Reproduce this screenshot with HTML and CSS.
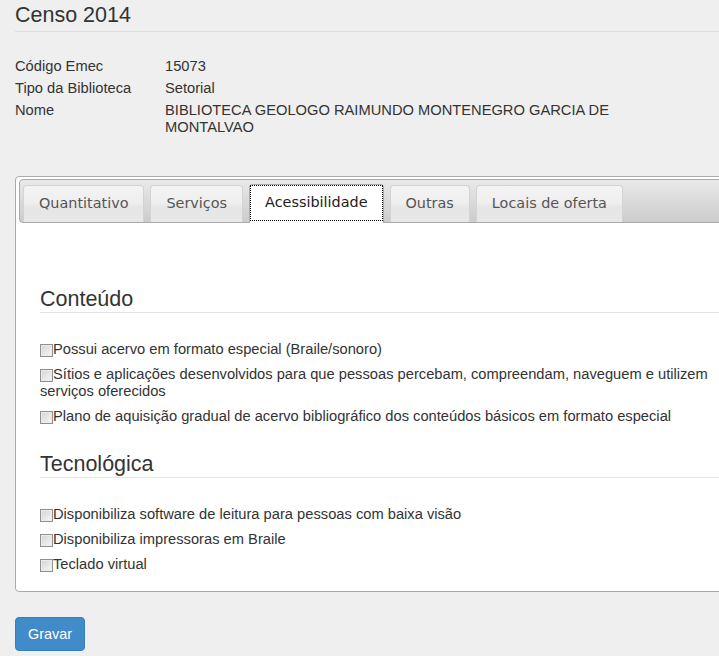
FILE: index.html
```html
<!DOCTYPE html>
<html lang="pt">
<head>
<meta charset="utf-8">
<title>Censo 2014</title>
<link rel="stylesheet" href="styles.css">
</head>
<body>
<div class="page">
  <h1 class="page-title">Censo 2014</h1>

  <div class="info">
    <div class="info-label">Código Emec</div>
    <div class="info-value">15073</div>
    <div class="info-label">Tipo da Biblioteca</div>
    <div class="info-value">Setorial</div>
    <div class="info-label">Nome</div>
    <div class="info-value">BIBLIOTECA GEOLOGO RAIMUNDO MONTENEGRO GARCIA DE MONTALVAO</div>
  </div>

  <div class="tabs">
    <ul class="tabnav">
      <li class="tab"><a>Quantitativo</a></li>
      <li class="tab"><a>Serviços</a></li>
      <li class="tab active"><a>Acessibilidade</a></li>
      <li class="tab"><a>Outras</a></li>
      <li class="tab"><a>Locais de oferta</a></li>
    </ul>
    <div class="panel">
      <h2 class="legend">Conteúdo</h2>
      <div class="checks">
        <label class="check"><input type="checkbox">Possui acervo em formato especial (Braile/sonoro)</label>
        <label class="check"><input type="checkbox">Sítios e aplicações desenvolvidos para que pessoas percebam, compreendam, naveguem e utilizem serviços oferecidos</label>
        <label class="check"><input type="checkbox">Plano de aquisição gradual de acervo bibliográfico dos conteúdos básicos em formato especial</label>
      </div>
      <h2 class="legend legend-next">Tecnológica</h2>
      <div class="checks">
        <label class="check"><input type="checkbox">Disponibiliza software de leitura para pessoas com baixa visão</label>
        <label class="check"><input type="checkbox">Disponibiliza impressoras em Braile</label>
        <label class="check"><input type="checkbox">Teclado virtual</label>
      </div>
    </div>
  </div>

  <button class="btn-primary" type="button">Gravar</button>
</div>
</body>
</html>
```

FILE: styles.css
```css
html, body {
  margin: 0;
  padding: 0;
  background: #efefef;
  overflow: hidden;
}

body {
  font-family: "Liberation Sans", Arial, sans-serif;
  font-size: 14.7px;
  color: #333;
}

.page {
  width: 745px;
  padding: 0 0 0 15px;
}

.page-title {
  margin: 0;
  padding: 5px 0 5px;
  font-size: 21.5px;
  line-height: 21px;
  font-weight: normal;
  color: #333;
  border-bottom: 1px solid #dedede;
}

.info {
  display: grid;
  grid-template-columns: 150px 480px;
  row-gap: 5px;
  margin-top: 26px;
  line-height: 17px;
}

.tabs {
  margin-top: 40px;
  border: 1px solid #aaa;
  border-radius: 4px;
  background: #fff;
  padding: 2px 3px;
}

.tabnav {
  list-style: none;
  margin: 0;
  padding: 4px 3px 0;
  display: flex;
  align-items: flex-end;
  gap: 6px;
  border: 1px solid #aaa;
  border-radius: 4px;
  background: linear-gradient(#e9e9e9, #cccccc);
}

.tab {
  border: 1px solid #d3d3d3;
  border-bottom: 0;
  border-radius: 4px 4px 0 0;
  background: linear-gradient(#f3f3f3 0%, #efefef 45%, #e6e6e6 60%, #e8e8e8 100%);
  font-family: "DejaVu Sans", Verdana, sans-serif;
  font-size: 14.4px;
}

.tab a {
  display: block;
  padding: 9px 15px 10px;
  line-height: 17px;
  color: #555;
}

.tab.active {
  background: #fff;
  border-color: #aaa;
  margin-bottom: -1px;
  padding: 0 0 1px;
  position: relative;
}

.tab.active a {
  color: #212121;
  padding: 8px 14px 9px;
  border: 1px dotted #000;
  margin-bottom: 1px;
}

.panel {
  padding: 66px 21px 16px;
}

.legend {
  margin: 0;
  padding: 0 0 2px;
  font-size: 21.5px;
  line-height: 21px;
  font-weight: normal;
  color: #333;
  border-bottom: 1px solid #e5e5e5;
}

.legend-next {
  margin-top: 29px;
}

.checks {
  display: flex;
  flex-direction: column;
  gap: 8px;
  margin-top: 28px;
}

.check {
  display: block;
  line-height: 17px;
}

.check input {
  -webkit-appearance: none;
  appearance: none;
  width: 13px;
  height: 13px;
  margin: 0;
  vertical-align: -3px;
  border: 1px solid #8f8f8f;
  background: linear-gradient(135deg, #d4d4d4, #f7f7f7);
  box-shadow: inset 0 0 0 1px #ececec;
  box-sizing: border-box;
}

.btn-primary {
  margin-top: 25px;
  display: block;
  height: 34px;
  padding: 0 12px;
  border: 1px solid #357ebd;
  border-radius: 4px;
  background: #428bca;
  color: #fff;
  font-family: "Liberation Sans", Arial, sans-serif;
  font-size: 14.4px;
  line-height: 20px;
}
```
